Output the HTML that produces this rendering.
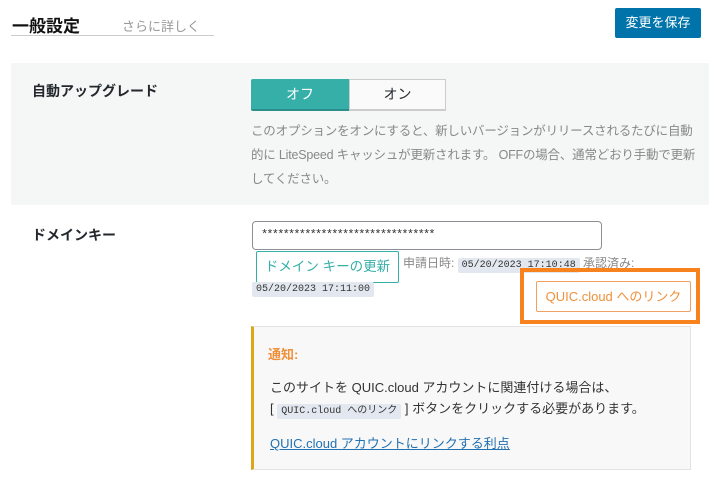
<html><head><style>
body{margin:0;width:717px;height:480px;background:#fff;font-family:"Liberation Sans","Noto Sans CJK JP",sans-serif;position:relative;overflow:hidden;color:#23282d}
.a{position:absolute;white-space:nowrap}
code,.code{font-family:"Liberation Mono","Noto Sans CJK JP",monospace;font-size:10px;background:#e3e8f0;padding:2px 4px;border-radius:2px;color:#333}
</style></head><body>
<div class="a" style="left:12px;top:12px;font-size:17px;font-weight:bold;color:#111">一般設定</div>
<div class="a" style="left:122px;top:16px;font-size:13px;color:#999">さらに詳しく</div>
<div class="a" style="left:11px;top:35px;width:203px;height:1px;background:#ccc"></div>
<div class="a" style="left:615px;top:8px;width:86px;height:30px;background:#0073aa;color:#fff;font-size:13px;text-align:center;line-height:30px;border-radius:2px">変更を保存</div>
<div class="a" style="left:11px;top:63px;width:698px;height:142px;background:#f5f6f6"></div>
<div class="a" style="left:32px;top:81px;font-size:14px;font-weight:bold">自動アップグレード</div>
<div class="a" style="left:251px;top:79px;width:98px;height:32px;background:#36afa9;border-bottom:2px solid #2a8f8a;box-sizing:border-box;color:#fff;font-size:14px;text-align:center;line-height:30px;border-radius:2px 0 0 2px">オフ</div>
<div class="a" style="left:349px;top:79px;width:97px;height:32px;background:#fafafa;border:1px solid #ccc;border-bottom:2px solid #ccc;box-sizing:border-box;font-size:14px;text-align:center;line-height:29px">オン</div>
<div class="a" style="left:251px;top:119px;width:450px;font-size:12.5px;line-height:24px;color:#888;white-space:normal;letter-spacing:-0.2px">このオプションをオンにすると、新しいバージョンがリリースされるたびに自動<br>的に LiteSpeed キャッシュが更新されます。 OFFの場合、通常どおり手動で更新<br>してください。</div>
<div class="a" style="left:32px;top:225px;font-size:14px;font-weight:bold">ドメインキー</div>
<div class="a" style="left:252px;top:221px;width:350px;height:29px;border:1px solid #8c8f94;border-radius:4px;box-sizing:border-box;font-size:12px;line-height:27px;padding-left:8px;color:#333;font-family:'Liberation Mono',monospace;letter-spacing:-1.8px">********************************</div>
<div class="a" style="left:256px;top:251px;width:143px;height:32px;border:1px solid #36afa9;border-radius:2px;box-sizing:border-box;color:#36afa9;font-size:13.5px;text-align:center;line-height:30px">ドメイン キーの更新</div>
<div class="a" style="left:403px;top:254px;font-size:12px;color:#888">申請日時: <span class="code">05/20/2023 17:10:48</span> 承認済み:</div>
<div class="a" style="left:252px;top:284px"><span class="code">05/20/2023 17:11:00</span></div>
<div class="a" style="left:520px;top:268px;width:180px;height:56px;border:4px solid #f7821e;box-sizing:border-box"></div>
<div class="a" style="left:536px;top:281px;width:155px;height:31px;border:1px solid #f0a060;border-radius:2px;box-sizing:border-box;color:#f0903a;font-size:13px;text-align:center;line-height:29px">QUIC.cloud へのリンク</div>
<div class="a" style="left:251px;top:326px;width:440px;height:144px;background:#f8f8f8;border:1px solid #e2e2e2;border-left:3px solid #dba617;box-sizing:border-box"></div>
<div class="a" style="left:268px;top:344px;font-size:13px;font-weight:bold;color:#f0903a">通知:</div>
<div class="a" style="left:270px;top:377px;font-size:13px;color:#333">このサイトを QUIC.cloud アカウントに関連付ける場合は、</div>
<div class="a" style="left:270px;top:398px;font-size:13px;color:#333">[ <span class="code">QUIC.cloud へのリンク</span> ] ボタンをクリックする必要があります。</div>
<div class="a" style="left:270px;top:433px;font-size:13px;color:#2271b1;text-decoration:underline">QUIC.cloud アカウントにリンクする利点</div>
</body></html>
